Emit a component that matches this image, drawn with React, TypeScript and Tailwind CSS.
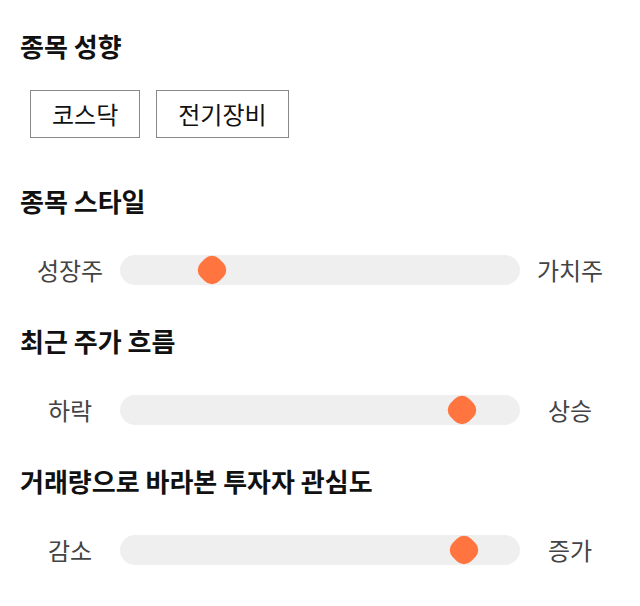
import React from "react";

const font = { fontFamily: '"Noto Sans CJK KR", "Noto Sans", sans-serif' };

type SliderRowProps = {
  left: string;
  right: string;
  value: number;
};

function SliderRow({ left, right, value }: SliderRowProps) {
  return (
    <div className="flex h-[30px] items-center">
      <span className="w-[100px] text-center text-[24px] leading-none text-[#444]">{left}</span>
      <div className="relative h-[30px] flex-1 rounded-full bg-[#efefef]">
        <div
          className="absolute top-[2px] h-[26px] w-[26px] rotate-45 rounded-[10px] bg-[#ff743f]"
          style={{ left: `calc(${value}% - 13px)` }}
        />
      </div>
      <span className="w-[100px] text-center text-[24px] leading-none text-[#444]">{right}</span>
    </div>
  );
}

function Heading({ children }: { children: React.ReactNode }) {
  return <h2 className="text-[26px] font-bold leading-8 text-[#111]">{children}</h2>;
}

export default function App() {
  return (
    <div className="min-h-[606px] w-[640px] bg-white px-5 pt-[30px]" style={font}>
      <section>
        <Heading>종목 성향</Heading>
        <div className="mt-[28px] flex gap-4 pl-[10px]">
          {["코스닥", "전기장비"].map((tag) => (
            <span
              key={tag}
              className="flex h-12 items-center border border-[#888] px-[21px] text-[24px] leading-none text-[#111]"
            >
              {tag}
            </span>
          ))}
        </div>
      </section>

      <section className="mt-[47px]">
        <Heading>종목 스타일</Heading>
        <div className="mt-[38px]">
          <SliderRow left="성장주" right="가치주" value={23} />
        </div>
      </section>

      <section className="mt-10">
        <Heading>최근 주가 흐름</Heading>
        <div className="mt-[38px]">
          <SliderRow left="하락" right="상승" value={85.5} />
        </div>
      </section>

      <section className="mt-10">
        <Heading>거래량으로 바라본 투자자 관심도</Heading>
        <div className="mt-[38px]">
          <SliderRow left="감소" right="증가" value={86} />
        </div>
      </section>
    </div>
  );
}
